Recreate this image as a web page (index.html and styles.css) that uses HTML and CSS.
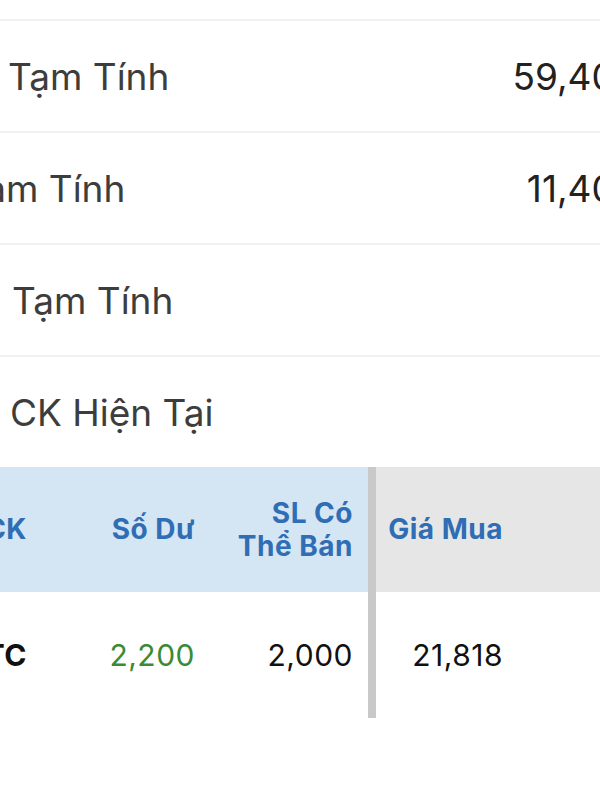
FILE: index.html
```
<!DOCTYPE html>
<html lang="vi">

<head>
  <meta charset="UTF-8">
  <meta name="viewport" content="width=device-width, initial-scale=1.0">
  <title>Danh Mục</title>
  <link rel="stylesheet" href="styles.css">
</head>

<body>

  <div class="page">
    <div class="summary">
      <div class="row">
        <span class="label">Tạm Tính</span>
        <span class="value">59,400,000</span>
      </div>
      <div class="row">
        <span class="label label-cut">Tạm Tính</span>
        <span class="value">11,400,000</span>
      </div>
      <div class="row">
        <span class="label label-in">Tạm Tính</span>
      </div>
      <div class="row">
        <span class="label label-ck">CK Hiện Tại</span>
      </div>
    </div>

    <div class="holdings">
      <div class="th">Mã CK</div>
      <div class="th">Số Dư</div>
      <div class="th split">SL Có<br>Thể Bán</div>
      <div class="th th-gray">Giá Mua</div>
      <div class="th th-gray"></div>

      <div class="td symbol">HTC</div>
      <div class="td up">2,200</div>
      <div class="td split">2,000</div>
      <div class="td">21,818</div>
      <div class="td"></div>
    </div>
  </div>

</body>

</html>
```

FILE: styles.css
```
* {
  box-sizing: border-box;
  margin: 0;
  padding: 0;
  font-family: 'Inter', 'Noto Sans', sans-serif;
}

body {
  background: #fff;
  width: 600px;
  height: 800px;
  overflow: hidden;
}

.page {
  width: 600px;
  overflow: hidden;
}

.summary {
  padding-top: 19px;
  width: 733px;
}

.row {
  height: 112px;
  border-top: 2px solid #f1f1f1;
  display: flex;
  align-items: center;
  justify-content: space-between;
  padding: 0 16px 0 8px;
  white-space: nowrap;
}

.label {
  font-size: 37px;
  color: #3d3d3d;
}

.label-cut {
  margin-left: -44px;
}

.label-in {
  margin-left: 4px;
}

.label-ck {
  margin-left: 2px;
}

.value {
  font-size: 37px;
  color: #222;
}

.holdings {
  display: grid;
  grid-template-columns: 87px 168px 181px 152px 140px;
  margin-left: -60px;
  width: 728px;
}

.th {
  height: 125px;
  background: #d4e5f4;
  color: #2f6db5;
  font-size: 28px;
  font-weight: 700;
  letter-spacing: 0.5px;
  line-height: 33px;
  display: flex;
  align-items: center;
  justify-content: flex-end;
  text-align: right;
  white-space: nowrap;
}

.th-gray {
  background: #e6e6e6;
}

.td {
  height: 126px;
  font-size: 30px;
  letter-spacing: 0.5px;
  color: #111;
  display: flex;
  align-items: center;
  justify-content: flex-end;
  white-space: nowrap;
}

.split {
  padding-right: 15px;
  border-right: 8px solid #c9c9c9;
}

.th:nth-child(4),
.td:nth-child(9) {
  padding-right: 25px;
}

.symbol {
  font-weight: 700;
}

.up {
  color: #3b8a35;
}
```
